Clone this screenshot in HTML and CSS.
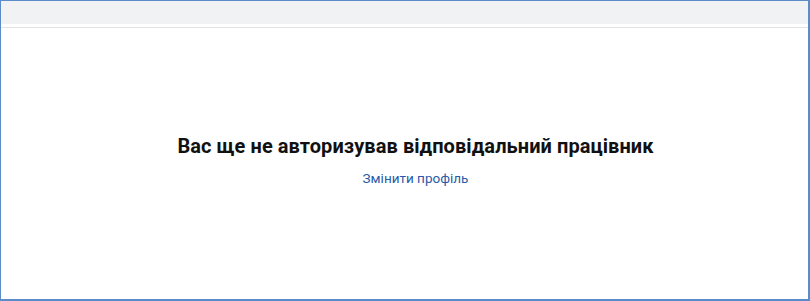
FILE: index.html
```html
<!DOCTYPE html>
<html lang="uk">
<head>
  <meta charset="UTF-8" />
  <title>Авторизація</title>
  <link rel="stylesheet" href="styles.css">
</head>
<body>
  <div class="frame">
    <div class="topbar"></div>
    <div class="divider"></div>
    <main class="content">
      <h1 class="title">Вас ще не авторизував відповідальний працівник</h1>
      <a class="link" href="#">Змінити профіль</a>
    </main>
  </div>
</body>
</html>
```

FILE: styles.css
```css
html, body { margin: 0; padding: 0; background: #fff; }
body { font-family: "Roboto", "Liberation Sans", sans-serif; }
.frame { box-sizing: border-box; width: 810px; height: 301px; border: 1px solid #5b8bc9; border-right-width: 2px; border-bottom-width: 2px; display: flex; flex-direction: column; }
.topbar { height: 23px; background: #f1f2f4; }
.divider { height: 1px; margin-top: 3px; background: #e2e3e5; }
.content { flex: 1; display: flex; flex-direction: column; align-items: center; padding-top: 106px; padding-left: 22px; }
.title { margin: 0; font-size: 20px; letter-spacing: 0.07px; font-weight: 700; color: #111; line-height: 24px; }
.link { margin-top: 11px; font-size: 13.5px; color: #2a5aa6; text-decoration: none; line-height: 18px; }
```
